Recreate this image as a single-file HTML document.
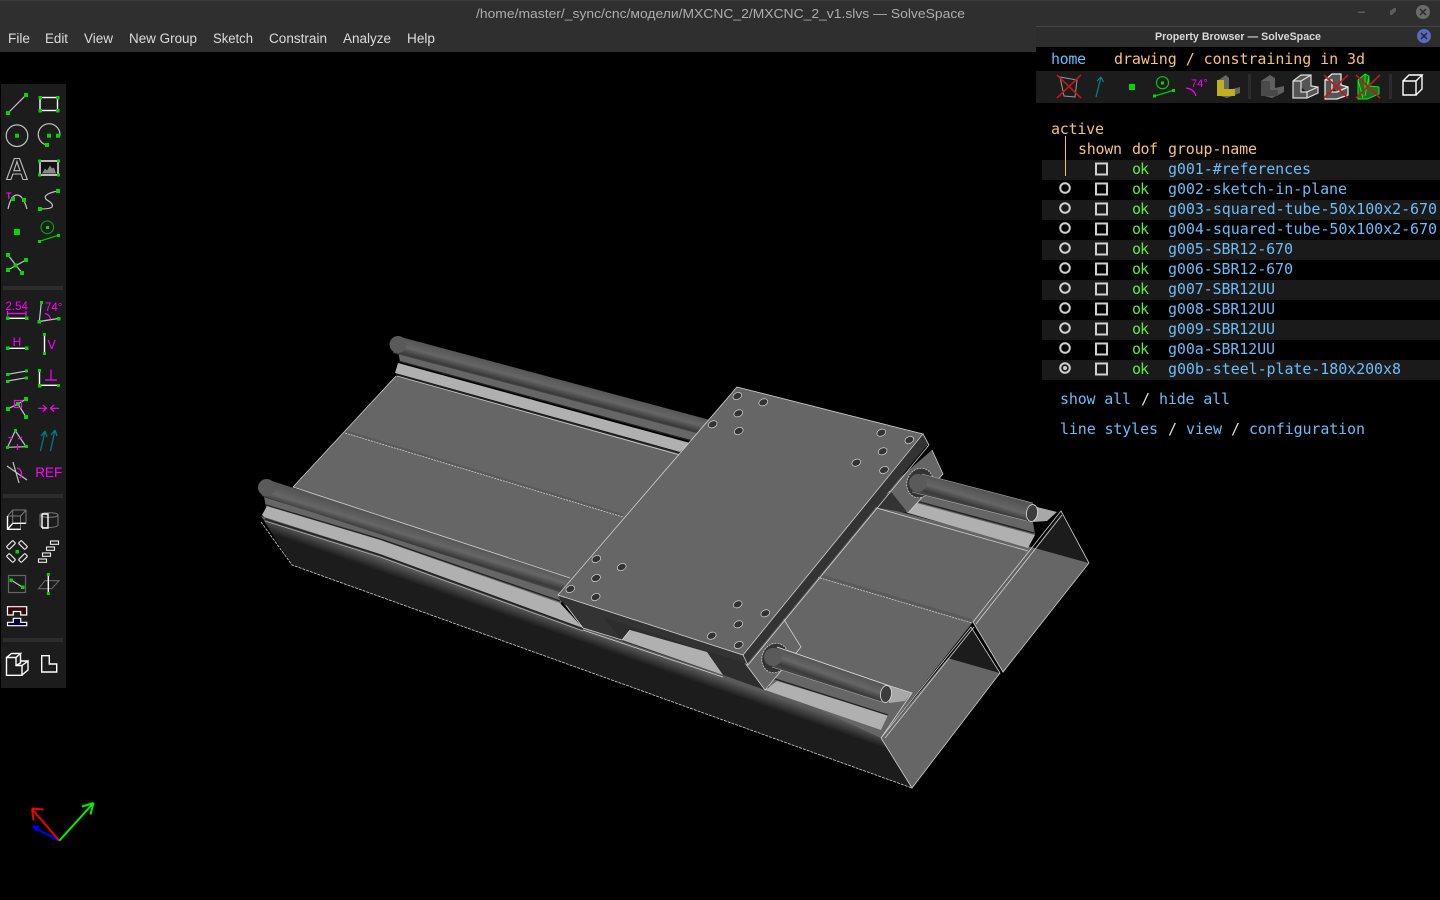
<!DOCTYPE html>
<html lang="en">
<head>
<meta charset="utf-8">
<title>SolveSpace</title>
<style>
html,body{margin:0;padding:0;background:#000;width:1440px;height:900px;overflow:hidden}
svg{position:absolute;left:0;top:0;display:block}
.m{font-family:"DejaVu Sans Mono","Liberation Mono",monospace;font-size:15px;font-weight:400}
.o{fill:#f8c07c}.b{fill:#6cbcf8}.g{fill:#5cec40}
.u{font-family:"Liberation Sans","DejaVu Sans",sans-serif;font-size:13.5px;fill:#dcdcdc}
.e{stroke:#cfcfcf;stroke-width:.8;fill:none}
.p{fill:#00d800}
.w{stroke:#fff;stroke-width:1.4;fill:none}
.y{stroke:#c4c4c4;stroke-width:1.2;fill:none}
.v{stroke:#f0f;stroke-width:1.2;fill:none}
.t{font-family:"Liberation Sans",sans-serif;fill:#f0f}
.x{stroke:#c01818;stroke-width:1.6;fill:none}
</style>
</head>
<body>
<svg width="1440" height="900" viewBox="0 0 1440 900" xmlns="http://www.w3.org/2000/svg">
<defs>
<linearGradient id="rodA" gradientUnits="userSpaceOnUse" x1="400" y1="523" x2="394.500" y2="541"><stop offset="0" stop-color="#555"/><stop offset=".5" stop-color="#666"/><stop offset=".88" stop-color="#3a3a3a"/><stop offset="1" stop-color="#444"/></linearGradient>
<linearGradient id="rodB" gradientUnits="userSpaceOnUse" x1="397" y1="336" x2="392.500" y2="353"><stop offset="0" stop-color="#555"/><stop offset=".5" stop-color="#666"/><stop offset=".88" stop-color="#3a3a3a"/><stop offset="1" stop-color="#444"/></linearGradient>
<linearGradient id="rodC" gradientUnits="userSpaceOnUse" x1="922" y1="474" x2="917" y2="491"><stop offset="0" stop-color="#555"/><stop offset=".5" stop-color="#666"/><stop offset=".88" stop-color="#3a3a3a"/><stop offset="1" stop-color="#444"/></linearGradient>
<linearGradient id="rodD" gradientUnits="userSpaceOnUse" x1="777" y1="647" x2="771" y2="664"><stop offset="0" stop-color="#555"/><stop offset=".5" stop-color="#666"/><stop offset=".88" stop-color="#3a3a3a"/><stop offset="1" stop-color="#444"/></linearGradient>
<linearGradient id="side" gradientUnits="userSpaceOnUse" x1="316.700" y1="536" x2="312.500" y2="548"><stop offset="0" stop-color="#5a5a5a"/><stop offset="1" stop-color="#1c1c1c"/></linearGradient>
</defs>
<rect width="1440" height="900" fill="#000"/>

<!-- MODEL -->
<g>
<polygon points="261,516 380,552 583,627 765,688 881,730 912,788 292,565" fill="url(#side)"/>
<polyline class="e" stroke-dasharray="3 1" points="261,522 292,565 912,788"/>
<polygon points="396,376 1035,548 973,622 881,738 570,595 293,487" fill="#666"/>
<polygon points="345,433 623,517 623,514 345,430" fill="#5a5a5a"/>
<polygon points="817,577 972,623 972,619 817,573" fill="#5a5a5a"/>
<line class="e" stroke-dasharray="2 1" x1="345" y1="433" x2="623" y2="517"/>
<line class="e" stroke-dasharray="2 1" x1="817" y1="577" x2="972" y2="623"/>
<line class="e" x1="396" y1="376" x2="293" y2="487"/>

<!-- far end of tubes -->
<polygon points="881,738 948,658 1000,673 912,788" fill="#666"/>
<polygon points="971,627 948,658 1000,673" fill="#1c1c1c"/>
<polyline class="e" points="881,738 971,627 1000,673 912,788 881,738"/>
<line class="e" x1="885" y1="738" x2="974" y2="627"/>
<polygon points="973,622 1035,548 1089,563 1003,672" fill="#666"/>
<polygon points="1061,513 1035,548 1089,563" fill="#1c1c1c"/>
<polyline class="e" points="973,622 1061,511 1089,563 1003,672 973,622"/>
<line class="e" x1="976" y1="624" x2="1062" y2="515"/>

<!-- lower-left rail -->
<polygon points="264,497 570,592 560,604 266,507" fill="#666"/>
<polygon points="267,506 380,540 560,603 583,628 380,554 264,517 262,515" fill="#b0b0b0"/>
<polyline points="266,505 380,539 560,601" fill="none" stroke="#222" stroke-width="1.300"/>
<polyline points="265,519 380,555 583,629" fill="none" stroke="#222" stroke-width="1.600"/>
<polyline points="265,521 380,557 583,631" fill="none" stroke="#ccc" stroke-width=".6"/>
<!-- upper-left rail -->
<polygon points="398,350 712,434 706,444 400,362" fill="#666"/>
<polygon points="398,363 395,373 680,452 690,443" fill="#b0b0b0"/>
<line x1="400" y1="361.500" x2="692" y2="441" stroke="#222" stroke-width="1.300"/>
<line x1="396" y1="374.500" x2="681" y2="453.500" stroke="#222" stroke-width="1.600"/>
<line class="e" stroke-width=".6" x1="397" y1="376" x2="680" y2="455"/>

<!-- left rods -->
<polygon points="266,479 570,578 562,593 262,496" fill="url(#rodA)"/>
<circle cx="266.500" cy="487.500" r="8.500" fill="#5a5a5a"/>
<line class="e" x1="293" y1="487" x2="570" y2="578"/>
<polygon points="397,336 710,420 700,434 393,353" fill="url(#rodB)"/>
<circle cx="398" cy="344.500" r="8.500" fill="#5a5a5a"/>

<!-- under-plate lower rail -->
<polygon points="583,628 745,663 765,690 723,675" fill="#2d2d2d"/>
<polygon points="558,597 745,663 723,675 583,628" fill="#2d2d2d"/>
<polygon points="622,640 630,630 707,652 723,675" fill="#b0b0b0"/>
<polygon points="565,604 583,628 622,640 603,617" fill="#333"/>
<polyline class="e" points="565,604 583,628 622,640 630,630"/>
<line class="e" x1="583" y1="630" x2="723" y2="677"/>

<!-- right rails -->
<polygon points="772,668 772,678 888,715 887,700" fill="#666"/>
<polygon points="777,681 765,690 881,730 888,715" fill="#b0b0b0"/>
<line x1="772" y1="678" x2="888" y2="715" stroke="#222" stroke-width="1.400"/>
<polygon points="887,685 912,693 905,701 889,703" fill="#a8a8a8"/>
<polyline class="e" points="887,685 912,693 881,738"/>
<polygon points="915,492 917,503 1035,535 1033,522" fill="#666"/>
<polygon points="917,503 908,513 1028,548 1035,535" fill="#b0b0b0"/>
<line x1="916" y1="501" x2="1034" y2="533" stroke="#222" stroke-width="1.400"/>
<polygon points="1037,507 1057,512 1047,521 1033,522" fill="#a8a8a8"/>
<line class="e" x1="873" y1="507" x2="1028" y2="551"/>

<!-- bearing blocks -->
<polygon points="873,507 893,488 908,513" fill="#333"/>
<polyline class="e" points="873,507 893,488 908,513"/>
<polygon points="932,450 943,474 908,513 888,488" fill="#666"/>
<polyline class="e" points="932,450 943,474 908,513"/>
<polygon points="783,618 801,647 765,690 745,663" fill="#666"/>
<polyline class="e" points="783,618 801,647 765,690 745,663"/>
<ellipse cx="920" cy="483" rx="13" ry="15" fill="#333" transform="rotate(20 920 483)"/>
<ellipse cx="920" cy="483" rx="13" ry="15" class="e" stroke-dasharray="2 1" transform="rotate(20 920 483)"/>
<ellipse cx="775" cy="658" rx="13" ry="15" fill="#333" transform="rotate(20 775 658)"/>
<ellipse cx="775" cy="658" rx="13" ry="15" class="e" stroke-dasharray="2 1" transform="rotate(20 775 658)"/>

<!-- right rods -->
<polygon points="922,474 1033,503 1027,521 912,492" fill="url(#rodC)"/>
<circle cx="918" cy="483" r="9" fill="#5a5a5a"/>
<line stroke="#aaa" stroke-width=".6" x1="922" y1="474" x2="1033" y2="503"/>
<line stroke="#aaa" stroke-width=".6" x1="912" y1="492" x2="1027" y2="521"/>
<ellipse cx="1032" cy="513" rx="5.500" ry="8.500" fill="#3c3c3c" stroke="#ddd" stroke-width=".8" transform="rotate(8 1032 513)"/>
<polygon points="777,647 887,685 882,702 772,667" fill="url(#rodD)"/>
<circle cx="773" cy="657" r="9" fill="#5a5a5a"/>
<line stroke="#e4e4e4" stroke-width=".9" x1="777" y1="647" x2="887" y2="685"/>
<line stroke="#aaa" stroke-width=".6" x1="772" y1="667" x2="882" y2="702"/>
<ellipse cx="886" cy="694" rx="5.500" ry="8.500" fill="#3c3c3c" stroke="#ddd" stroke-width=".8" transform="rotate(8 886 694)"/>

<!-- plate -->
<polygon points="923,435 928,444 747,664 743,654" fill="#333"/>
<polygon points="559,596 743,654 747,664 565,605" fill="#333"/>
<polygon points="737,387 923,434 743,655 558,595" fill="#666"/>
<polygon class="e" points="737,387 923,434 743,655 558,595"/>
<polyline class="e" points="923,434 929,445 748,665 743,655"/>
<g fill="#333" stroke="#d8d8d8" stroke-width=".7">
<ellipse cx="737.300" cy="396" rx="4.600" ry="3.300" transform="rotate(-25 737.300 396)"/>
<ellipse cx="763.300" cy="402.300" rx="4.600" ry="3.300" transform="rotate(-25 763.300 402.300)"/>
<ellipse cx="738.300" cy="413.300" rx="4.600" ry="3.300" transform="rotate(-25 738.300 413.300)"/>
<ellipse cx="712.700" cy="424.300" rx="4.600" ry="3.300" transform="rotate(-25 712.700 424.300)"/>
<ellipse cx="738.700" cy="431" rx="4.600" ry="3.300" transform="rotate(-25 738.700 431)"/>
<ellipse cx="881.300" cy="432.700" rx="4.600" ry="3.300" transform="rotate(-25 881.300 432.700)"/>
<ellipse cx="909.300" cy="440" rx="4.600" ry="3.300" transform="rotate(-25 909.300 440)"/>
<ellipse cx="882.700" cy="451.300" rx="4.600" ry="3.300" transform="rotate(-25 882.700 451.300)"/>
<ellipse cx="856.300" cy="462.700" rx="4.600" ry="3.300" transform="rotate(-25 856.300 462.700)"/>
<ellipse cx="884" cy="470" rx="4.600" ry="3.300" transform="rotate(-25 884 470)"/>
<ellipse cx="596.300" cy="559" rx="4.600" ry="3.300" transform="rotate(-25 596.300 559)"/>
<ellipse cx="621.700" cy="567" rx="4.600" ry="3.300" transform="rotate(-25 621.700 567)"/>
<ellipse cx="596" cy="578" rx="4.600" ry="3.300" transform="rotate(-25 596 578)"/>
<ellipse cx="570.300" cy="589" rx="4.600" ry="3.300" transform="rotate(-25 570.300 589)"/>
<ellipse cx="595.700" cy="597" rx="4.600" ry="3.300" transform="rotate(-25 595.700 597)"/>
<ellipse cx="737.700" cy="604.300" rx="4.600" ry="3.300" transform="rotate(-25 737.700 604.300)"/>
<ellipse cx="765.300" cy="613.300" rx="4.600" ry="3.300" transform="rotate(-25 765.300 613.300)"/>
<ellipse cx="738.300" cy="624.300" rx="4.600" ry="3.300" transform="rotate(-25 738.300 624.300)"/>
<ellipse cx="711.700" cy="635.700" rx="4.600" ry="3.300" transform="rotate(-25 711.700 635.700)"/>
<ellipse cx="738.700" cy="645" rx="4.600" ry="3.300" transform="rotate(-25 738.700 645)"/>
</g>
</g>

<!-- axes -->
<g fill="none" stroke-width="2">
<path d="M59.300 840.700L33 827M33 826l4 5M33 826l6 1" stroke="#0000ff"/>
<path d="M59.300 840.700L32 809M32 808.500l1.500 12M32 808.500l11.500 1" stroke="#f00000"/>
<path d="M59.300 840.700L93.500 803M93.500 803l-11.500 3.500M93.500 803l-3 11.500" stroke="#00f000"/>
</g>

<!-- main title and menu -->
<rect width="1440" height="52" fill="#2f2f2f"/>
<rect y="0" width="1440" height="1" fill="#3c3c3c"/>
<text x="476" y="18" textLength="489" lengthAdjust="spacingAndGlyphs" font-family="'Liberation Sans','DejaVu Sans',sans-serif" font-size="13" fill="#adadad">/home/master/_sync/cnc/модели/MXCNC_2/MXCNC_2_v1.slvs — SolveSpace</text>
<rect x="1358" y="11.500" width="7" height="1.500" fill="#5c5c5c"/>
<path d="M1390 11l4-3h2v3l-4 4h-2z" fill="#5c5c5c"/>
<circle cx="1423" cy="12" r="7" fill="#6a6a6a"/>
<path d="M1420 9l6 6M1426 9l-6 6" stroke="#2a2a2a" stroke-width="1.500"/>
<text class="u" x="8" y="43" textLength="22" lengthAdjust="spacingAndGlyphs">File</text>
<text class="u" x="45" y="43" textLength="23" lengthAdjust="spacingAndGlyphs">Edit</text>
<text class="u" x="84" y="43" textLength="29" lengthAdjust="spacingAndGlyphs">View</text>
<text class="u" x="129" y="43" textLength="68" lengthAdjust="spacingAndGlyphs">New Group</text>
<text class="u" x="213" y="43" textLength="40" lengthAdjust="spacingAndGlyphs">Sketch</text>
<text class="u" x="269" y="43" textLength="58" lengthAdjust="spacingAndGlyphs">Constrain</text>
<text class="u" x="343" y="43" textLength="48" lengthAdjust="spacingAndGlyphs">Analyze</text>
<text class="u" x="407" y="43" textLength="28" lengthAdjust="spacingAndGlyphs">Help</text>

<!-- property browser window -->
<rect x="1036" y="26" width="404" height="21" fill="#2d2d2d"/>
<rect x="1036" y="26" width="404" height="1" fill="#454545"/>
<rect x="1036" y="47" width="404" height="413" fill="#000"/>
<text x="1155" y="40" textLength="166" lengthAdjust="spacingAndGlyphs" font-family="'Liberation Sans',sans-serif" font-weight="700" font-size="11" fill="#d8d8d8">Property Browser — SolveSpace</text>
<circle cx="1424" cy="36" r="7" fill="#5a6cb8"/>
<path d="M1421 33l6 6M1427 33l-6 6" stroke="#1e2440" stroke-width="1.500"/>

<text class="m b" x="1051" y="64" textLength="35">home</text>
<text class="m o" x="1114" y="64" textLength="251">drawing / constraining in 3d</text>

<rect x="1036" y="71" width="404" height="32" fill="#1c1c1c"/>
<rect x="1248" y="74" width="3" height="25" fill="#2c2c2c"/>
<rect x="1389" y="74" width="3" height="25" fill="#2c2c2c"/>
<!-- browser toolbar icons -->
<polygon points="1060,77 1077,80 1075,97 1064,96" fill="none" stroke="#999" stroke-width="1"/>
<path class="x" d="M1057 75l24 23M1081 75l-24 23"/>
<path d="M1096 97l5-20M1101 77l-4 4M1101 77l2.500 5" stroke="#00868a" stroke-width="1.200" fill="none"/>
<rect class="p" x="1129" y="84" width="6" height="6"/>
<circle cx="1162.500" cy="82.700" r="6" fill="none" stroke="#0c0" stroke-width="1.200"/>
<rect class="p" x="1161" y="81.500" width="3" height="3"/>
<line x1="1155" y1="96" x2="1173" y2="90.500" stroke="#0c0" stroke-width="1.200"/>
<rect class="p" x="1153" y="94.500" width="3" height="3"/>
<rect class="p" x="1172" y="89" width="3" height="3"/>
<text class="t" x="1191" y="87" font-size="11">74°</text>
<path class="v" d="M1186 88q8 1 10 8" stroke="#b020b0"/>
<polygon points="1217,81 1226,75 1229,78 1229,90 1240,87 1240,93 1227,98 1217,95" fill="#666"/>
<polygon points="1217,80 1224,80 1224,89 1235,89 1235,96 1217,96" fill="#c0b020"/>
<polygon points="1261,81 1270,75 1275,78 1275,88 1284,86 1284,92 1272,98 1261,95" fill="#606060"/>
<polygon points="1261,81 1270,81 1270,90 1278,90 1278,96 1261,96" fill="#4a4a4a"/>
<path d="M1293 81l8-6h10v11l7 1v6l-11 5h-14zM1293 81h8v11h6M1301 81l10-6M1307 92l11-5M1307 92v6" fill="#555" stroke="#ddd" stroke-width="1.200"/>
<path d="M1325 80l7-6h9v11l7 2v8l-11 4h-12zM1325 80h7v12h5M1337 92l11-5" fill="#555" stroke="#e8e8e8" stroke-width="1.300"/>
<path class="x" d="M1324 75l24 23M1348 75l-24 23"/>
<path d="M1358 80l7-6 4 2v10l10 1v7l-12 5h-9zM1358 80l5 18M1365 74v16M1369 76l-4 20" fill="#2a6a2a" stroke="#0f0" stroke-width=".9"/>
<path class="x" d="M1356 75l24 23M1380 75l-24 23"/>
<path class="w" d="M1403 81h13v14h-13zM1403 81l6-6h13l-6 6M1422 75v14l-6 6"/>

<!-- group table -->
<text class="m o" x="1051" y="134" textLength="53">active</text>
<text class="m o" x="1078" y="154" textLength="44">shown</text>
<text class="m o" x="1132" y="154" textLength="26">dof</text>
<text class="m o" x="1168" y="154" textLength="89">group-name</text>
<rect x="1042" y="160" width="398" height="20" fill="#1a1a1a"/>
<rect x="1042" y="200" width="398" height="20" fill="#1a1a1a"/>
<rect x="1042" y="240" width="398" height="20" fill="#1a1a1a"/>
<rect x="1042" y="280" width="398" height="20" fill="#1a1a1a"/>
<rect x="1042" y="320" width="398" height="20" fill="#1a1a1a"/>
<rect x="1042" y="360" width="398" height="20" fill="#1a1a1a"/>
<line x1="1065.500" y1="136" x2="1065.500" y2="176" stroke="#f5bd7a" stroke-width="1"/>
<g fill="none" stroke="#d0d0d0" stroke-width="2">
<rect x="1096" y="163.500" width="11" height="11"/><rect x="1096" y="183.500" width="11" height="11"/><rect x="1096" y="203.500" width="11" height="11"/><rect x="1096" y="223.500" width="11" height="11"/><rect x="1096" y="243.500" width="11" height="11"/><rect x="1096" y="263.500" width="11" height="11"/><rect x="1096" y="283.500" width="11" height="11"/><rect x="1096" y="303.500" width="11" height="11"/><rect x="1096" y="323.500" width="11" height="11"/><rect x="1096" y="343.500" width="11" height="11"/><rect x="1096" y="363.500" width="11" height="11"/>
<circle cx="1065" cy="188" r="4.800"/><circle cx="1065" cy="208" r="4.800"/><circle cx="1065" cy="228" r="4.800"/><circle cx="1065" cy="248" r="4.800"/><circle cx="1065" cy="268" r="4.800"/><circle cx="1065" cy="288" r="4.800"/><circle cx="1065" cy="308" r="4.800"/><circle cx="1065" cy="328" r="4.800"/><circle cx="1065" cy="348" r="4.800"/><circle cx="1065" cy="368" r="4.800"/>
</g>
<circle cx="1065" cy="368" r="2" fill="#d0d0d0"/>
<g class="m g"><text x="1132" y="174" textLength="17">ok</text><text x="1132" y="194" textLength="17">ok</text><text x="1132" y="214" textLength="17">ok</text><text x="1132" y="234" textLength="17">ok</text><text x="1132" y="254" textLength="17">ok</text><text x="1132" y="274" textLength="17">ok</text><text x="1132" y="294" textLength="17">ok</text><text x="1132" y="314" textLength="17">ok</text><text x="1132" y="334" textLength="17">ok</text><text x="1132" y="354" textLength="17">ok</text><text x="1132" y="374" textLength="17">ok</text></g>
<g class="m b">
<text x="1168" y="174" textLength="143">g001-#references</text>
<text x="1168" y="194" textLength="179">g002-sketch-in-plane</text>
<text x="1168" y="214" textLength="269">g003-squared-tube-50x100x2-670</text>
<text x="1168" y="234" textLength="269">g004-squared-tube-50x100x2-670</text>
<text x="1168" y="254" textLength="125">g005-SBR12-670</text>
<text x="1168" y="274" textLength="125">g006-SBR12-670</text>
<text x="1168" y="294" textLength="107">g007-SBR12UU</text>
<text x="1168" y="314" textLength="107">g008-SBR12UU</text>
<text x="1168" y="334" textLength="107">g009-SBR12UU</text>
<text x="1168" y="354" textLength="107">g00a-SBR12UU</text>
<text x="1168" y="374" textLength="233">g00b-steel-plate-180x200x8</text>
<text x="1060" y="404" textLength="71">show all</text>
<text x="1159" y="404" textLength="71">hide all</text>
<text x="1060" y="434" textLength="98">line styles</text>
<text x="1186" y="434" textLength="36">view</text>
<text x="1249" y="434" textLength="116">configuration</text>
</g>
<text class="m" x="1141" y="404" fill="#ddd">/</text>
<text class="m" x="1168" y="434" fill="#ddd">/</text>
<text class="m" x="1231" y="434" fill="#ddd">/</text>

<!-- left toolbar -->
<rect x="1" y="84" width="65" height="604" fill="#1c1c1c"/>
<rect x="3" y="286" width="60" height="4" fill="#2c2c2c"/>
<rect x="3" y="494" width="60" height="4" fill="#2c2c2c"/>
<rect x="3" y="638" width="60" height="4" fill="#2c2c2c"/>

<!-- row 1 -->
<line class="y" x1="8" y1="113" x2="26" y2="95"/>
<rect class="p" x="6" y="111" width="4" height="4"/><rect class="p" x="24" y="93" width="4" height="4"/>
<rect class="w" x="40" y="97.500" width="17.500" height="13"/>
<rect class="p" x="38.500" y="96" width="3.500" height="3.500"/><rect class="p" x="56" y="96" width="3.500" height="3.500"/><rect class="p" x="38.500" y="109" width="3.500" height="3.500"/><rect class="p" x="56" y="109" width="3.500" height="3.500"/>
<!-- row 2 -->
<circle class="y" cx="17" cy="135.700" r="10.800"/><rect class="p" x="15" y="133.700" width="4" height="4"/>
<path class="y" d="M45 144.500A10.800 10.800 0 1 1 59.800 135.700"/>
<rect class="p" x="47" y="133.700" width="4" height="4"/><rect class="p" x="56" y="133.700" width="4" height="4"/><rect class="p" x="45" y="143" width="4" height="4"/>
<!-- row 3 -->
<text x="17" y="179.500" text-anchor="middle" font-family="'Liberation Sans',sans-serif" font-weight="700" font-size="31" fill="none" stroke="#bbb" stroke-width="1.100">A</text>
<rect x="40" y="161" width="18" height="14" fill="#111" stroke="#fff" stroke-width="1.400"/>
<path d="M42 173.500l3-5 2 2 3-5 2 3 2-1 2 6z" fill="#888"/>
<rect class="p" x="38" y="159.500" width="3" height="3"/><rect class="p" x="57" y="159.500" width="3" height="3"/><rect class="p" x="38" y="173.500" width="3" height="3"/><rect class="p" x="57" y="173.500" width="3" height="3"/>
<!-- row 4 -->
<text class="t" x="6" y="199" font-size="9" font-weight="700">T</text>
<path class="y" d="M8 209q3-14 9-14t10 14"/>
<rect class="p" x="11" y="197" width="4" height="4"/><rect class="p" x="22" y="198" width="4" height="4"/>
<path class="y" d="M40 209q10 0 12-2 2-3-5-7-4-3 1-6 4-2 10-3"/>
<rect class="p" x="38" y="207" width="4" height="4"/><rect class="p" x="56" y="189" width="4" height="4"/>
<!-- row 5 -->
<rect class="p" x="14" y="229" width="6" height="6"/>
<circle cx="47.300" cy="227.300" r="6.300" fill="none" stroke="#0a0" stroke-width="1.100"/>
<rect class="p" x="46" y="226" width="3" height="3"/>
<line x1="39.300" y1="241.300" x2="58.300" y2="235.300" stroke="#0c0" stroke-width="1.100"/>
<rect class="p" x="38" y="240" width="3" height="3"/><rect class="p" x="57" y="234" width="3" height="3"/>
<!-- row 6 -->
<path class="y" d="M8 255l14 18M26 260l-18 10"/>
<rect class="p" x="6" y="253" width="4" height="4"/><rect class="p" x="24" y="258" width="4" height="4"/><rect class="p" x="6" y="268" width="4" height="4"/><rect class="p" x="20" y="271" width="4" height="4"/><rect class="p" x="13.500" y="263.500" width="4" height="4"/>

<!-- constraints -->
<text class="t" x="16.700" y="310" text-anchor="middle" font-size="11.500">2.54</text>
<path class="v" d="M7.500 311v5M26 311v5M7.500 313.500h18.500"/>
<line class="w" x1="8" y1="318.300" x2="26" y2="318.300"/>
<rect class="p" x="6" y="316.500" width="3.500" height="3.500"/><rect class="p" x="25" y="316.500" width="3.500" height="3.500"/>
<path class="y" d="M39.300 321.500L41.300 302.500M39.300 321.500L58.300 318.500"/>
<text class="t" x="45" y="311" font-size="11.500">74°</text>
<path class="v" d="M45 313.500q5 1 5.500 6"/>
<rect class="p" x="40" y="301" width="3" height="3"/><rect class="p" x="37.500" y="320" width="3.500" height="3.500"/><rect class="p" x="57" y="317" width="3.500" height="3.500"/>
<text class="t" x="17" y="346" text-anchor="middle" font-size="12">H</text>
<line class="w" x1="8" y1="348.300" x2="26" y2="348.300"/>
<rect class="p" x="6" y="346.500" width="3.500" height="3.500"/><rect class="p" x="25" y="346.500" width="3.500" height="3.500"/>
<line class="w" x1="44.500" y1="334.500" x2="44.500" y2="353.500"/>
<text class="t" x="51.700" y="349" text-anchor="middle" font-size="12.500">V</text>
<rect class="p" x="43" y="333" width="3" height="3"/><rect class="p" x="43" y="352" width="3" height="3"/>
<path class="y" d="M7.500 374.300L26.700 371M7.500 381L26.700 377.700"/>
<rect class="p" x="6" y="373" width="3.500" height="3"/><rect class="p" x="25" y="369.500" width="3" height="3"/><rect class="p" x="6" y="380" width="3.500" height="3"/><rect class="p" x="25" y="376.500" width="3" height="3"/>
<path class="w" d="M39.500 370.300V385.300H58.300"/>
<path class="v" d="M45 380h12M51 369.500V380"/>
<rect class="p" x="38" y="369" width="3" height="3"/><rect class="p" x="38" y="384" width="3.500" height="3.500"/><rect class="p" x="57" y="384" width="3" height="3"/>
<path class="y" d="M8 408.700L18 404L26 417M18 404L26 399"/>
<rect class="v" x="14.500" y="400.500" width="7" height="7"/>
<rect class="p" x="6" y="407" width="4" height="4"/><rect class="p" x="24" y="397" width="4" height="4"/><rect class="p" x="24" y="415" width="4" height="4"/><rect class="p" x="16" y="402" width="4" height="4"/>
<path class="v" d="M38 408.300h8M43 405l3.500 3.300L43 411.500M59 408.300h-8M54 405l-3.500 3.300L54 411.500"/>
<path class="y" d="M15.300 430.700L7.500 447.300L26 446.700Z"/>
<path class="v" d="M8.500 437l4 2M22 437l-4 2M17.500 444v6"/>
<rect class="p" x="14" y="429" width="3" height="3"/><rect class="p" x="6" y="446" width="3" height="3"/><rect class="p" x="25" y="445" width="3" height="3"/>
<path d="M40.500 451l4.500-20M45 431l-4 5M45 431l2 6M50.500 451l4.500-21M55 430l-4 5M55 430l2 6" stroke="#007b80" stroke-width="1.300" fill="none"/>
<path class="y" d="M7 466l20 14M13 462l6 21"/>
<path class="v" d="M17 468a6 6 0 0 1 3 10" stroke="#b020b0"/>
<text class="t" x="48.700" y="477" text-anchor="middle" font-size="13.500">REF</text>

<!-- view group -->
<path d="M7.500 516h13v13M12.700 510h13.300v13.300h-5.300M7.500 516l5.200-6M20.700 516l5.300-6M12.700 510v13" fill="none" stroke="#777" stroke-width="1"/>
<path class="w" d="M7.500 516v13.300h13.300M7.500 529.300l5.300-6h13" stroke-width="1"/>
<path d="M40 515c0-3 18-3 18 0v10c0 3-18 4-18 0zM40 515c0 3 18 3 18 0" fill="none" stroke="#777" stroke-width="1"/>
<path class="w" d="M42 514v14M42 514h6v14h-6" stroke-width="1"/>
<g fill="none" stroke="#eee" stroke-width="1.100">
<rect x="-4.500" y="-2" width="9" height="4" rx="1" transform="translate(11 545) rotate(-45)"/>
<rect x="-4.500" y="-2" width="9" height="4" rx="1" transform="translate(23 545) rotate(45)"/>
<rect x="-4.500" y="-2" width="9" height="4" rx="1" transform="translate(11 558) rotate(45)"/>
<rect x="-4.500" y="-2" width="9" height="4" rx="1" transform="translate(23 558) rotate(-45)"/>
<rect x="50.500" y="541" width="8" height="3.300"/><rect x="46.500" y="547" width="8" height="3.300"/><rect x="42.500" y="553" width="8" height="3.300"/><rect x="38.500" y="559" width="8" height="3.300"/>
</g>
<rect class="p" x="15.500" y="550" width="3.500" height="3.500"/>
<rect x="8.500" y="575.500" width="17" height="17" fill="none" stroke="#666" stroke-width="1.200"/>
<line class="y" x1="11.300" y1="580.300" x2="22.700" y2="587.300"/>
<rect class="p" x="9.500" y="578.500" width="3.500" height="3.500"/><rect class="p" x="21" y="585.500" width="3.500" height="3.500"/>
<polygon points="38.500,588.700 45,580.700 59,580.700 51.700,588.700" fill="none" stroke="#666" stroke-width="1.100"/>
<line class="w" x1="48.300" y1="574.500" x2="48.300" y2="593.500"/>
<rect class="p" x="46.800" y="573" width="3" height="3"/><rect class="p" x="46.800" y="592" width="3" height="3"/>
<path d="M7.500 606.700H26.700V615H20.700V611.500H13.300V615H7.500Z" fill="#3a0505" stroke="#fff" stroke-width="1.200"/>
<path d="M7.500 625.700H26.700V622.300H20.700V618.300H13.300V622.300H7.500Z" fill="#05053a" stroke="#fff" stroke-width="1.200"/>
<!-- extrude / sketch -->
<path class="w" d="M6.500 657.500h9.500v8h6v9.800H6.500zM6.500 657.500l5-4h9l-4.500 4M20.500 653.500v9.500l-4.500 2.500M22 665.500l6-4.500v9l-6 5M20.500 661h7.500" stroke-width="1.100"/>
<path class="w" d="M41.700 655.700h7.600V664h7.400v8H41.700z"/>
</svg>
</body>
</html>
